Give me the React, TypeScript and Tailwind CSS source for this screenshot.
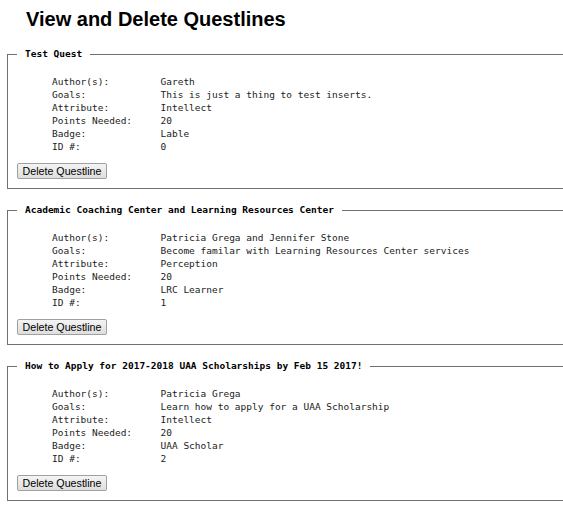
const questlines = [
  {
    title: "Test Quest",
    authors: "Gareth",
    goals: "This is just a thing to test inserts.",
    attribute: "Intellect",
    points: "20",
    badge: "Lable",
    id: "0",
  },
  {
    title: "Academic Coaching Center and Learning Resources Center",
    authors: "Patricia Grega and Jennifer Stone",
    goals: "Become familar with Learning Resources Center services",
    attribute: "Perception",
    points: "20",
    badge: "LRC Learner",
    id: "1",
  },
  {
    title: "How to Apply for 2017-2018 UAA Scholarships by Feb 15 2017!",
    authors: "Patricia Grega",
    goals: "Learn how to apply for a UAA Scholarship",
    attribute: "Intellect",
    points: "20",
    badge: "UAA Scholar",
    id: "2",
  },
];

const mono = "font-['DejaVu_Sans_Mono','Liberation_Mono',monospace]";

const App = () => {
  return (
    <div className="w-screen min-h-screen overflow-hidden bg-white text-black">
      <h1 className="pl-[26px] pt-[8px] text-[20px] leading-[23px] font-bold font-['Liberation_Sans',Arial,sans-serif]">
        View and Delete Questlines
      </h1>

      {questlines.map((q, index) => {
        const rows = [
          ["Author(s):", q.authors],
          ["Goals:", q.goals],
          ["Attribute:", q.attribute],
          ["Points Needed:", q.points],
          ["Badge:", q.badge],
          ["ID #:", q.id],
        ];
        return (
          <fieldset
            key={q.id}
            className={`ml-[7px] mr-[-12px] border border-[#707070] pl-[9px] pr-2 pb-[9px] ${
              index === 0 ? "mt-[16px]" : "mt-[14px]"
            }`}
          >
            <legend
              className={`px-2 text-[9.5px] leading-[14px] font-bold text-black ${mono}`}
            >
              {q.title}
            </legend>

            <div
              className={`grid grid-cols-[108.5px_auto] pl-[35px] pt-[14px] text-[9.5px] leading-[13px] text-[#222] ${mono}`}
            >
              {rows.map(([label, value]) => (
                <div key={label} className="contents">
                  <span className="whitespace-pre">{label}</span>
                  <span className="whitespace-pre">{value}</span>
                </div>
              ))}
            </div>

            <button
              type="button"
              className="mt-[10px] block h-[16px] w-[90px] border border-[#a0a0a0] rounded-[2px] bg-linear-to-b from-[#f4f4f4] to-[#dedede] px-0 text-[10.7px] leading-[14px] text-black font-['Liberation_Sans',Arial,sans-serif]"
            >
              Delete Questline
            </button>
          </fieldset>
        );
      })}
    </div>
  );
};

export default App;
